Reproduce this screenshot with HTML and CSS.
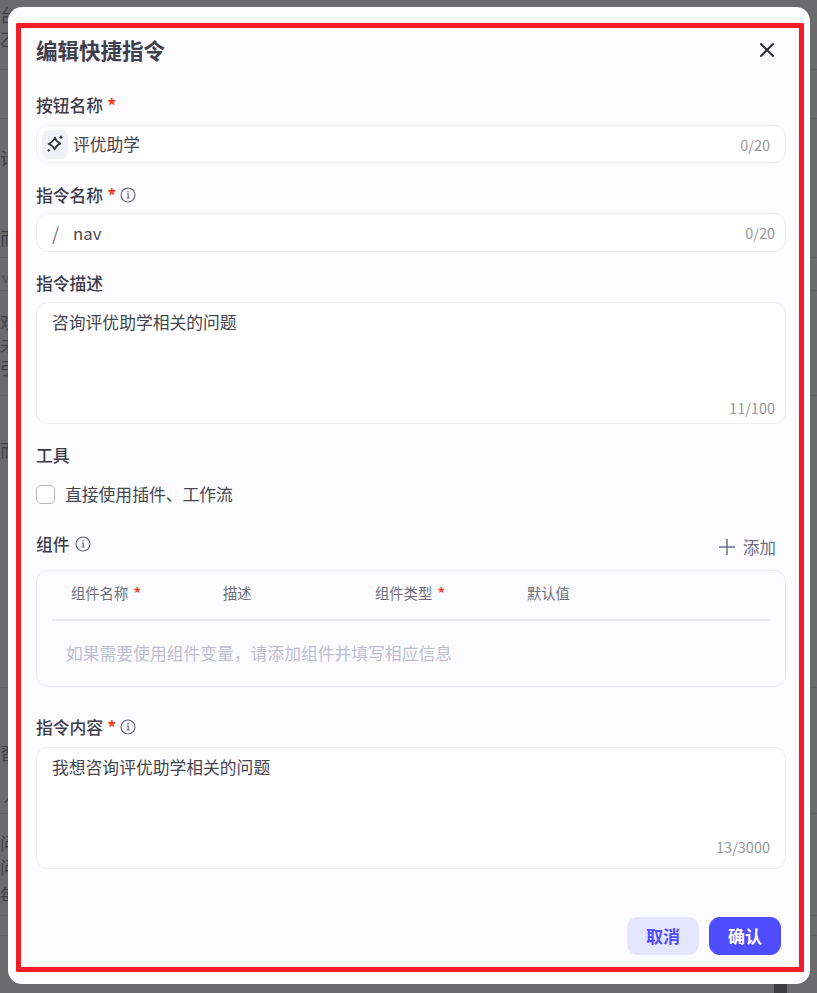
FILE: index.html
```html
<!DOCTYPE html>
<html>
<head>
	<title>编辑快捷指令</title>
	<link rel="stylesheet" href="styles.css">
</head>
<body>

	<div class="backdrop">
		<div class="back-row back-g3">台</div>
		<div class="back-row">乙</div>
		<div class="back-rule back-g18"></div>
		<div class="back-rule back-g48"></div>
		<div class="back-row back-g27">计</div>
		<div class="back-row back-g56">而</div>
		<div class="back-rule back-g7"></div>
		<div class="back-row back-chevron back-g7">v</div>
		<div class="back-rule back-g1"></div>
		<div class="back-row back-tight back-g19">欢</div>
		<div class="back-row back-tight">未</div>
		<div class="back-row back-tight">引,</div>
		<div class="back-rule back-g16"></div>
		<div class="back-row back-g42">而</div>
		<div class="back-rule back-g225"></div>
		<div class="back-row back-g53">習</div>
		<div class="back-row back-g18">丿</div>
		<div class="back-rule back-g6"></div>
		<div class="back-row back-g17">问</div>
		<div class="back-row">问</div>
		<div class="back-row back-g4">每</div>
		<div class="back-rule back-g8"></div>
		<div class="back-rule back-g19"></div>
	</div>
	<div class="back-knob"></div>

	<div class="modal">
		<div class="modal-head">
			<h2>编辑快捷指令</h2>
			<svg class="close" width="16" height="16" viewBox="0 0 16 16"><path d="M2 2l12 12M14 2L2 14" stroke="#2f2f3a" stroke-width="2" stroke-linecap="round"/></svg>
		</div>

		<div class="label first">按钮名称 <span class="req">*</span></div>
		<div class="input">
			<div class="icon-box">
				<svg width="20" height="20" viewBox="0 0 20 20" fill="none">
					<path d="M10 3.500Q11.200 7.800 15.500 9.500Q11.200 11.200 9.500 15.500Q7.800 11.200 3.500 10Q7.800 8.300 10 3.500Z" stroke="#2f2f3a" stroke-width="1.600" stroke-linejoin="round"/>
					<path d="M16 1Q16.300 3 18.200 3.300Q16.300 3.700 16 5.600Q15.700 3.700 13.800 3.300Q15.700 3 16 1Z" fill="#2f2f3a"/>
					<path d="M3.800 14.500Q4.100 16 5.600 16.300Q4.100 16.600 3.800 18.200Q3.500 16.600 2 16.300Q3.500 16 3.800 14.500Z" fill="#2f2f3a"/>
				</svg>
			</div>
			<span class="value">评优助学</span>
			<span class="count">0/20</span>
		</div>

		<div class="label label-name">指令名称 <span class="req">*</span> <svg class="info" width="16" height="16" viewBox="0 0 16 16" fill="none"><circle cx="8" cy="8" r="7" stroke="#5c5f70" stroke-width="1.100"/><path d="M6.800 7h1.400v4M6.600 11h3" stroke="#5c5f70" stroke-width="1.100"/><circle cx="8" cy="4.800" r=".8" fill="#5c5f70"/></svg></div>
		<div class="input input-name">
			<span class="slash">/</span>
			<span class="value">nav</span>
			<span class="count">0/20</span>
		</div>

		<div class="label label-desc">指令描述</div>
		<div class="textbox">
			<div>咨询评优助学相关的问题</div>
			<span class="count">11/100</span>
		</div>

		<div class="label tools">工具</div>
		<label class="check-row"><span class="checkbox"></span>直接使用插件、工作流</label>

		<div class="comp-head">
			<div class="label comp-label">组件 <svg class="info" width="16" height="16" viewBox="0 0 16 16" fill="none"><circle cx="8" cy="8" r="7" stroke="#5c5f70" stroke-width="1.100"/><path d="M6.800 7h1.400v4M6.600 11h3" stroke="#5c5f70" stroke-width="1.100"/><circle cx="8" cy="4.800" r=".8" fill="#5c5f70"/></svg></div>
			<div class="add"><svg width="16" height="16" viewBox="0 0 16 16"><path d="M8 0v16M0 8h16" stroke="#6b7080" stroke-width="1.500"/></svg>添加</div>
		</div>
		<div class="comp-box">
			<div class="comp-cols">
				<div>组件名称 <span class="req">*</span></div>
				<div>描述</div>
				<div>组件类型 <span class="req">*</span></div>
				<div>默认值</div>
			</div>
			<div class="comp-empty">如果需要使用组件变量，请添加组件并填写相应信息</div>
		</div>

		<div class="label content-label">指令内容 <span class="req">*</span> <svg class="info" width="16" height="16" viewBox="0 0 16 16" fill="none"><circle cx="8" cy="8" r="7" stroke="#5c5f70" stroke-width="1.100"/><path d="M6.800 7h1.400v4M6.600 11h3" stroke="#5c5f70" stroke-width="1.100"/><circle cx="8" cy="4.800" r=".8" fill="#5c5f70"/></svg></div>
		<div class="textbox">
			<div>我想咨询评优助学相关的问题</div>
			<span class="count count-wide">13/3000</span>
		</div>

		<div class="modal-foot">
			<button type="button" class="btn btn-cancel">取消</button>
			<button type="button" class="btn btn-ok">确认</button>
		</div>

		<div class="red-frame"></div>
	</div>

</body>
</html>
```

FILE: styles.css
```css
html, body {
	margin: 0;
	padding: 0;
}

body {
	width: 817px;
	height: 993px;
	overflow: hidden;
	background-color: #6b6b6e;
	font-family: "Noto Sans CJK SC", "Noto Sans", sans-serif;
	color: #3c3d49;
	position: relative;
}

/* page behind the dialog, only its left edge shows */
.backdrop {
	color: #404044;
	font-size: 17px;
	line-height: 24px;
	overflow: hidden;
	height: 993px;
}

.back-row { height: 24px; }
.back-tight { height: 23px; line-height: 23px; }
.back-chevron { font-size: 14px; padding-left: 2px; color: #515155; }
.back-rule { height: 1px; background-color: #626266; }

.back-g1 { margin-top: 1px; }
.back-g3 { margin-top: 3px; }
.back-g4 { margin-top: 4px; }
.back-g6 { margin-top: 6px; }
.back-g7 { margin-top: 7px; }
.back-g8 { margin-top: 8px; }
.back-g16 { margin-top: 16px; }
.back-g17 { margin-top: 17px; }
.back-g18 { margin-top: 18px; }
.back-g19 { margin-top: 19px; }
.back-g27 { margin-top: 27px; }
.back-g42 { margin-top: 42px; }
.back-g48 { margin-top: 48px; }
.back-g53 { margin-top: 53px; }
.back-g56 { margin-top: 56px; }
.back-g225 { margin-top: 225px; }

.back-knob {
	position: absolute;
	left: 774px;
	top: 980px;
	width: 13px;
	height: 13px;
	background-color: #3e3e42;
}

.modal {
	position: absolute;
	left: 8px;
	top: 7px;
	width: 802px;
	height: 977px;
	box-sizing: border-box;
	padding: 0 24px 0 28px;
	background-color: #fcfcff;
	border-radius: 14px;
}

.red-frame {
	position: absolute;
	left: 8px;
	top: 16px;
	width: 788px;
	height: 949px;
	box-sizing: border-box;
	border: 5px solid #f01c28;
	border-radius: 1px;
}

.modal-head {
	display: flex;
	justify-content: space-between;
	align-items: center;
	height: 30px;
	padding-top: 28px;
	padding-right: 11px;
}

.modal-head h2 {
	margin: 0;
	font-size: 21.500px;
	line-height: 30px;
	font-weight: 700;
	color: #3f404c;
}

.label {
	display: flex;
	align-items: center;
	gap: 4px;
	font-size: 16.800px;
	line-height: 24px;
	font-weight: 500;
	color: #3c3d49;
	margin-top: 20px;
	margin-bottom: 7px;
}

.label.first { margin-top: 28px; margin-bottom: 8px; }
.label.label-name { margin-bottom: 6px; }
.label.label-desc { margin-top: 19px; }

.req {
	color: #f5421e;
	font-weight: 700;
	font-size: 18px;
}

.info { margin-left: 0; }
.comp-label .info { margin-left: 1px; }

.input {
	height: 38px;
	box-sizing: border-box;
	width: 750px;
	display: flex;
	align-items: center;
	background-color: #fff;
	border: 1px solid #eeeef2;
	border-radius: 12px;
	padding: 0 15px 0 5px;
	font-size: 16.800px;
}

.input-name {
	height: 39px;
	padding-left: 15px;
	padding-right: 10px;
}

.icon-box {
	width: 26px;
	height: 29px;
	border-radius: 7px;
	background-color: #f0f1f7;
	display: flex;
	align-items: center;
	justify-content: center;
	margin-right: 5px;
}

.slash {
	color: #6d6e78;
	width: 21px;
	font-size: 18px;
}

.value {
	flex: 1;
	color: #44454f;
}

.count {
	color: #96969c;
	font-size: 14.500px;
}

.textbox {
	position: relative;
	width: 750px;
	height: 122px;
	box-sizing: border-box;
	background-color: #fff;
	border: 1px solid #eeeef2;
	border-radius: 12px;
	padding: 6px 15px;
	font-size: 16.800px;
	line-height: 26px;
	color: #44454f;
}

.textbox .count {
	position: absolute;
	right: 10px;
	bottom: 3px;
	line-height: 24px;
}

.textbox .count-wide { right: 15px; bottom: 9px; }

.label.tools { margin-top: 19px; margin-bottom: 0; }

.check-row {
	display: flex;
	align-items: center;
	gap: 10px;
	margin-top: 15px;
	font-size: 16.800px;
	line-height: 24px;
	color: #44454f;
}

.checkbox {
	width: 19px;
	height: 19px;
	box-sizing: border-box;
	background-color: #fff;
	border: 1px solid #b4b5bd;
	border-radius: 5px;
}

.comp-head {
	display: flex;
	justify-content: space-between;
	align-items: center;
	padding-right: 10px;
	margin-top: 23px;
	height: 30px;
}

.label.comp-label { margin: 0; }

.add {
	display: flex;
	align-items: center;
	gap: 8px;
	font-size: 16.500px;
	color: #6b7080;
	margin-top: 6px;
}

.comp-box {
	width: 750px;
	height: 117px;
	box-sizing: border-box;
	margin-top: 11px;
	padding: 0 15px;
	border: 1px solid #e7e8f1;
	border-radius: 12px;
}

.comp-cols {
	display: grid;
	grid-template-columns: repeat(4, 152px);
	height: 50px;
	box-sizing: border-box;
	padding: 10px 0 0 19px;
	border-bottom: 2px solid #ebebf0;
	font-size: 14.300px;
	line-height: 24px;
	color: #6d6e78;
}

.comp-cols .req {
	font-size: 15px;
	margin-left: 2px;
}

.comp-empty {
	padding: 20px 0 0 14px;
	font-size: 16.800px;
	line-height: 24px;
	color: #bcbecf;
}

.label.content-label { margin-top: 28px; margin-bottom: 8px; }

.modal-foot {
	display: flex;
	justify-content: flex-end;
	gap: 10px;
	padding-right: 5px;
	margin-top: 48px;
}

.btn {
	width: 72px;
	height: 38px;
	border: none;
	border-radius: 11px;
	font-family: inherit;
	font-size: 17px;
	font-weight: 700;
	padding: 0 0 2px;
}

.btn-cancel {
	background-color: #e4e5ff;
	color: #4f4cff;
}

.btn-ok {
	background-color: #4f4cff;
	color: #fff;
}
```
